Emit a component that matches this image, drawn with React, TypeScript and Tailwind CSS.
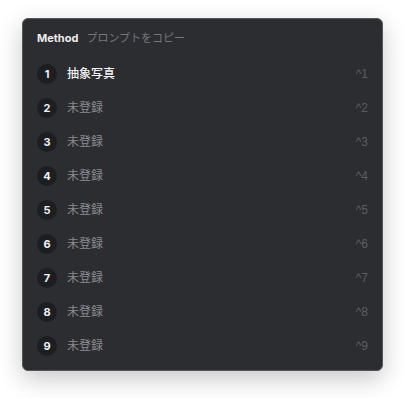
const ITEMS = ['抽象写真', '未登録', '未登録', '未登録', '未登録', '未登録', '未登録', '未登録', '未登録'];

export default function App() {
  return (
    <div
      className="w-[406px] h-[398px] bg-white pt-[18px] pl-[22px]"
      style={{ fontFamily: 'Inter, "Noto Sans CJK JP", sans-serif' }}
    >
      <div className="w-[361px] h-[353px] rounded-[6px] border border-[#56575c] bg-[#2c2d31] px-[14px] shadow-[0_8px_24px_rgba(0,0,0,0.22)]">
        <div className="flex h-[38px] items-center gap-[8px] text-[11px]">
          <span className="font-bold text-[#ececec]">Method</span>
          <span className="text-[#76777c]">プロンプトをコピー</span>
        </div>
        {ITEMS.map((label, i) => (
          <div key={i} className="flex h-[34px] items-center">
            <div className="flex h-[20px] w-[20px] items-center justify-center rounded-full bg-[#1d1e21] text-[11px] font-bold text-[#f0f0f0]">
              {i + 1}
            </div>
            <span
              className={
                i === 0
                  ? 'ml-[10px] text-[12px] font-medium text-[#f2f2f2]'
                  : 'ml-[10px] text-[12px] text-[#8a8b90]'
              }
            >
              {label}
            </span>
            <span className="ml-auto font-['Liberation_Sans',sans-serif] text-[12px] text-[#5c5d62]">
              ^{i + 1}
            </span>
          </div>
        ))}
      </div>
    </div>
  );
}
